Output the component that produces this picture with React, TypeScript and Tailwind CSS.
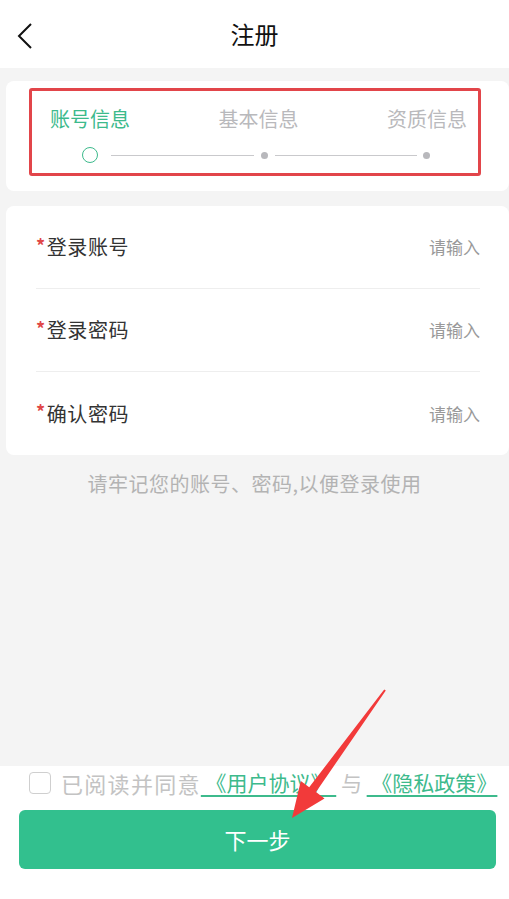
import React from "react";

const font = { fontFamily: '"Noto Sans CJK SC", "Noto Sans", sans-serif' };

function FormRow({ label, last }: { label: string; last?: boolean }) {
  return (
    <div className={`flex h-[83px] items-center justify-between ${last ? "" : "border-b border-[#eeeeee]"}`}>
      <div className="flex items-center text-[20px] tracking-[0.6px] text-[#333333]">
        <span className="mr-[1px] -translate-y-[2px] text-[18px] font-bold text-[#e04848]">*</span>
        {label}
      </div>
      <span className="text-[17px] text-[#999999]">请输入</span>
    </div>
  );
}

export default function App() {
  return (
    <div className="relative flex h-[899px] w-[509px] flex-col overflow-hidden bg-white" style={font}>
      {/* header */}
      <div className="relative flex h-[68px] shrink-0 items-center justify-center bg-white">
        <svg className="absolute left-[15px] top-[22px]" width="20" height="28" viewBox="0 0 20 28">
          <path d="M16 2 L4 14 L16 26" fill="none" stroke="#111" strokeWidth="2" />
        </svg>
        <span className="text-[24px] text-[#111111]">注册</span>
      </div>

      {/* body */}
      <div className="flex flex-1 flex-col bg-[#f4f4f4] pl-[6px] pt-[13px]">
        {/* steps card */}
        <div className="flex h-[110px] items-start rounded-[8px] bg-white pl-[23px] pr-[28px] pt-[7px]">
          <div className="flex h-[88px] w-full flex-col rounded-[3px] border-[3px] border-[#e2454a]">
            <div className="flex justify-between pl-[18px] pr-[11px] pt-[14px] text-[20px] leading-[28px]">
              <span className="text-[#3dba8c]">账号信息</span>
              <span className="text-[#b9b9bc]">基本信息</span>
              <span className="text-[#b9b9bc]">资质信息</span>
            </div>
            <div className="mt-[14px] flex items-center pl-[50px] pr-[48px]">
              <span className="h-[16px] w-[16px] rounded-full border-[1.5px] border-[#3dba8c]" />
              <span className="ml-[13px] mr-[7px] h-[1px] flex-1 bg-[#c9c9cc]" />
              <span className="h-[7px] w-[7px] rounded-full bg-[#b8b8bc]" />
              <span className="ml-[7px] mr-[6px] h-[1px] flex-1 bg-[#c9c9cc]" />
              <span className="h-[7px] w-[7px] rounded-full bg-[#b8b8bc]" />
            </div>
          </div>
        </div>

        {/* form card */}
        <div className="mt-[15px] rounded-[8px] bg-white pl-[30px] pr-[29px]">
          <FormRow label="登录账号" />
          <FormRow label="登录密码" />
          <FormRow label="确认密码" last />
        </div>

        <p className="mt-[14px] pr-[6px] text-center text-[20px] tracking-[0.5px] text-[#b3b3b3]">请牢记您的账号、密码,以便登录使用</p>
      </div>

      {/* bottom */}
      <div className="h-[133px] shrink-0 bg-white">
        <div className="flex h-[34px] items-center whitespace-nowrap pl-[29px] text-[21px] text-[#c3c3c3]">
          <span className="mr-[10px] h-[22px] w-[22px] shrink-0 rounded-[4px] border-[1.5px] border-[#cfcfcf]" />
          <span className="text-[22px] tracking-[1.3px]">已阅读并同意</span>
          <span className="underline decoration-[1.5px] underline-offset-[4px] text-[#3dba8c]">&nbsp;《用户协议》&nbsp;</span>
          <span>&nbsp;与&nbsp;</span>
          <span className="underline decoration-[1.5px] underline-offset-[4px] text-[#3dba8c]">&nbsp;《隐私政策》</span>
        </div>
        <div className="mt-[10px] pl-[19px] pr-[13px]">
          <button className="flex h-[59px] w-full items-center justify-center rounded-[6px] bg-[#32c08e] text-[22px] text-white">
            下一步
          </button>
        </div>
      </div>

      {/* annotation arrow */}
      <svg className="pointer-events-none absolute inset-0" width="509" height="899" viewBox="0 0 509 899">
        <polygon
          points="385.8,690.6 316,792 324.5,798.5 292,818 300.8,781 309.2,787.3 384.2,689.4"
          fill="#f23a3a"
        />
      </svg>
    </div>
  );
}
